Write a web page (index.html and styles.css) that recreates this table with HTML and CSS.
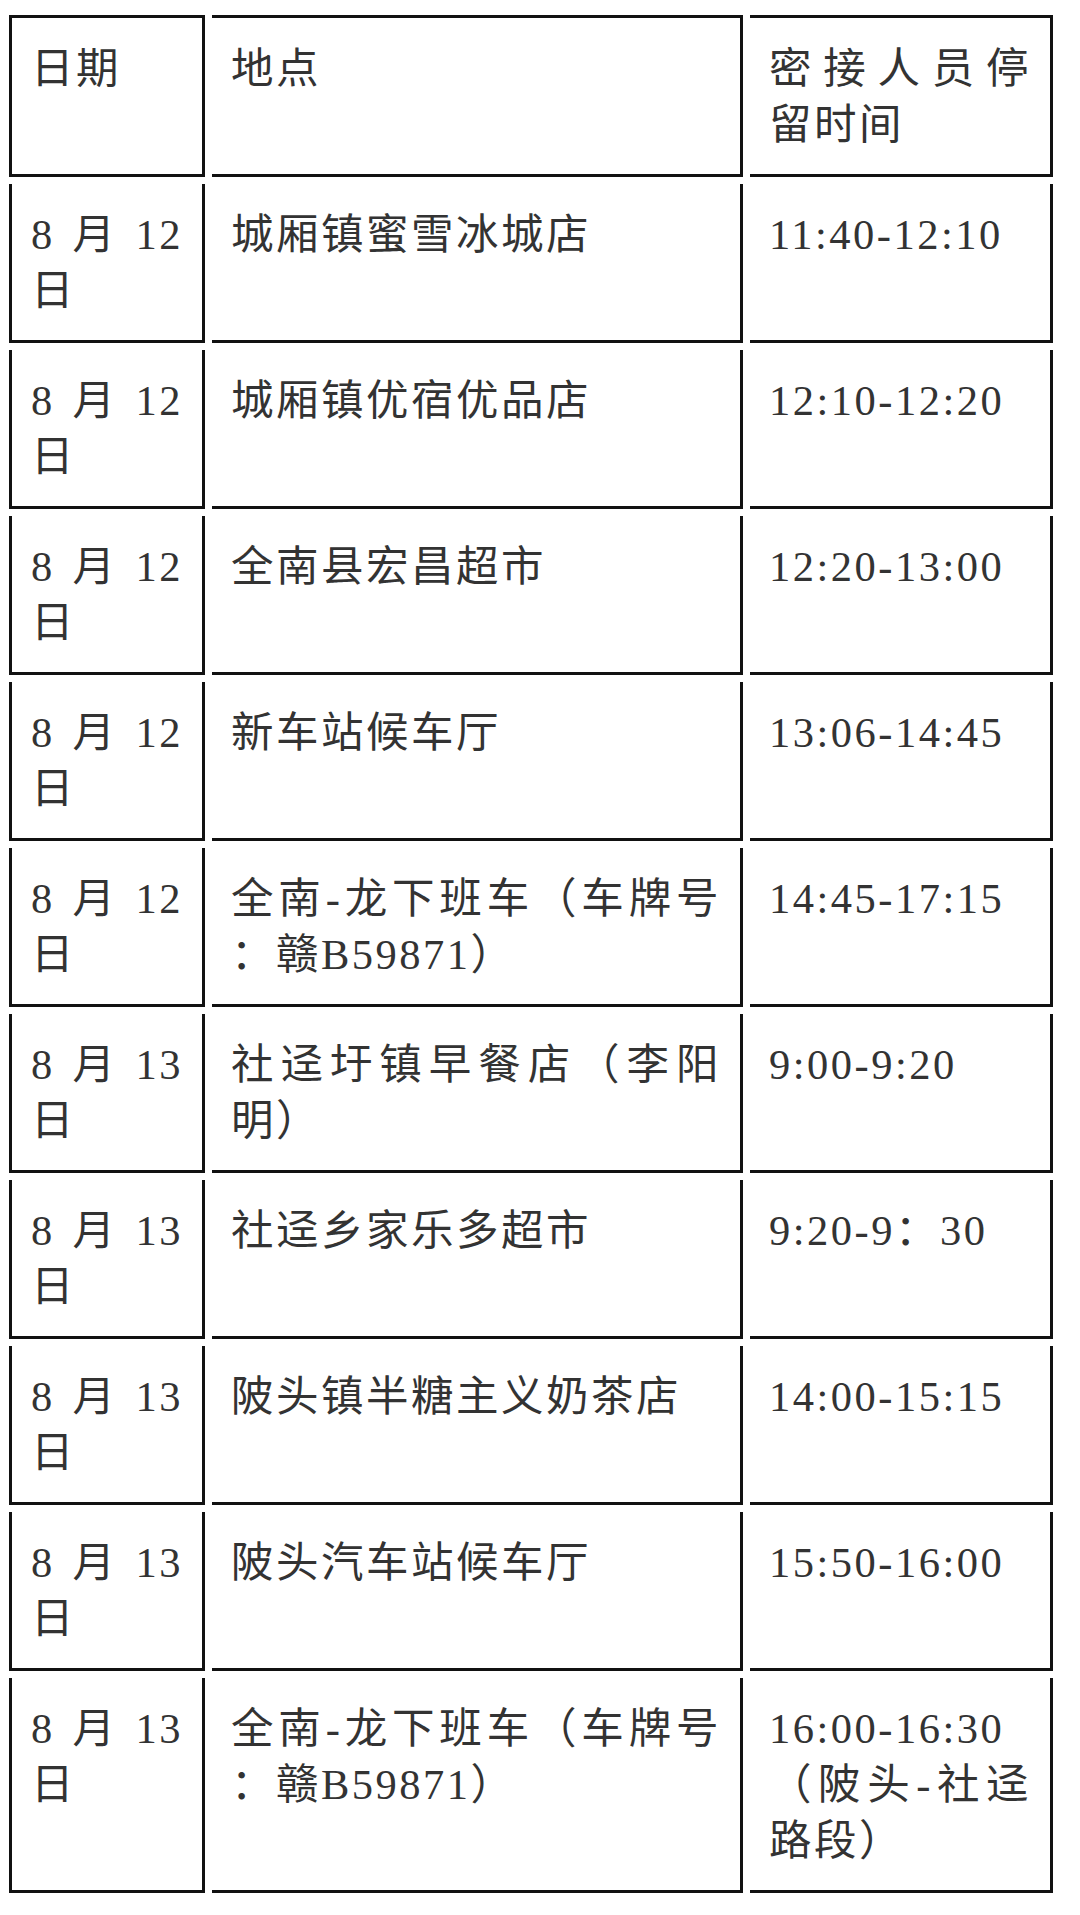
FILE: index.html
```html
<!DOCTYPE html>
<html lang="zh-CN">
<head>
<meta charset="utf-8">
<title>密接人员停留时间</title>
<link rel="stylesheet" href="styles.css">
</head>
<body>
<table class="schedule">
  <colgroup>
    <col class="col-date">
    <col class="col-place">
    <col class="col-time">
  </colgroup>
  <tr class="head">
    <td>日期</td>
    <td>地点</td>
    <td>密接人员停留时间</td>
  </tr>
  <tr>
    <td>8月12日</td>
    <td>城厢镇蜜雪冰城店</td>
    <td>11:40-12:10</td>
  </tr>
  <tr>
    <td>8月12日</td>
    <td>城厢镇优宿优品店</td>
    <td>12:10-12:20</td>
  </tr>
  <tr>
    <td>8月12日</td>
    <td>全南县宏昌超市</td>
    <td>12:20-13:00</td>
  </tr>
  <tr>
    <td>8月12日</td>
    <td>新车站候车厅</td>
    <td>13:06-14:45</td>
  </tr>
  <tr>
    <td>8月12日</td>
    <td>全南-龙下班车（车牌号：赣B59871）</td>
    <td>14:45-17:15</td>
  </tr>
  <tr>
    <td>8月13日</td>
    <td>社迳圩镇早餐店（李阳明）</td>
    <td>9:00-9:20</td>
  </tr>
  <tr>
    <td>8月13日</td>
    <td>社迳乡家乐多超市</td>
    <td>9:20-9：30</td>
  </tr>
  <tr>
    <td>8月13日</td>
    <td>陂头镇半糖主义奶茶店</td>
    <td>14:00-15:15</td>
  </tr>
  <tr>
    <td>8月13日</td>
    <td>陂头汽车站候车厅</td>
    <td>15:50-16:00</td>
  </tr>
  <tr>
    <td>8月13日</td>
    <td>全南-龙下班车（车牌号：赣B59871）</td>
    <td>16:00-16:30（陂头-社迳路段）</td>
  </tr>
</table>
</body>
</html>
```

FILE: styles.css
```css
html, body {
  margin: 0;
  padding: 0;
  background: #ffffff;
}

.schedule {
  border-collapse: separate;
  border-spacing: 7px;
  table-layout: fixed;
  width: 1058px;
  margin: 8px 0 0 2px;
  font-family: "Liberation Serif", "Noto Sans CJK SC", serif;
  font-size: 42.5px;
  line-height: 56px;
  letter-spacing: 2.5px;
  color: #333333;
}

.col-date { width: 196px; }
.col-place { width: 531px; }
.col-time { width: 303px; }

.schedule td {
  vertical-align: top;
  padding: 23px 19px 21px 19px;
  border-right: 3px solid #111111;
  border-bottom: 3px solid #111111;
  text-align: justify;
  line-break: anywhere;
}

.schedule td:first-child {
  border-left: 3px solid #111111;
}

.schedule .head td {
  border-top: 3px solid #111111;
}
```
